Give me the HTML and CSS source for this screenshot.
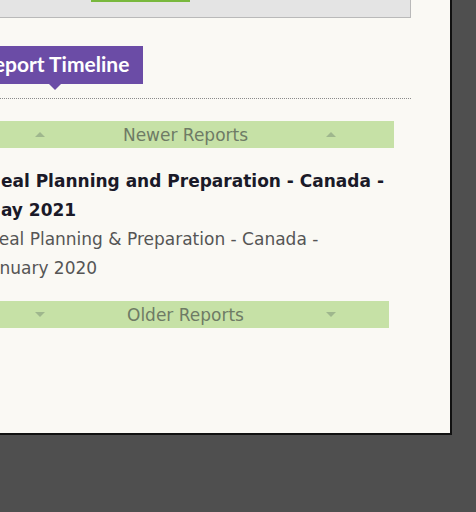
FILE: index.html
```html
<!DOCTYPE html>
<html>
<head>
<meta charset="utf-8">
<link rel="stylesheet" href="styles.css">
</head>
<body>
<div class="panel">
  <div class="content">
    <div class="topbox"><div class="topbtn"></div></div>
    <div class="tabrow">
      <div class="tab">Report Timeline</div>
    </div>
    <div class="rule"></div>
    <div class="bar bar-newer">
      <span class="tri tri-up"></span>
      <span class="bar-label">Newer Reports</span>
      <span class="tri tri-up"></span>
    </div>
    <div class="reports">
      <div class="report current">Meal Planning and Preparation - Canada - May 2021</div>
      <div class="report">Meal Planning &amp; Preparation - Canada - January 2020</div>
    </div>
    <div class="bar bar-older">
      <span class="tri tri-down"></span>
      <span class="bar-label">Older Reports</span>
      <span class="tri tri-down"></span>
    </div>
  </div>
</div>
</body>
</html>
```
FILE: styles.css
```css
html, body {
  margin: 0;
  padding: 0;
}
body {
  background: #4f4f4f;
  width: 476px;
  height: 512px;
  overflow: hidden;
}
.panel {
  width: 450px;
  height: 433px;
  background: #faf9f4;
  border-right: 2px solid #111;
  border-bottom: 2px solid #111;
  overflow: visible;
}
.content {
  margin-left: -20px;
  width: 431px;
}
.topbox {
  height: 17px;
  background: #e4e4e4;
  border-right: 1px solid #b9b9b9;
  border-bottom: 1px solid #b9b9b9;
  width: 430px;
}
.topbtn {
  margin-left: 111px;
  width: 99px;
  height: 2px;
  background: #79b83d;
}
.tabrow {
  margin-top: 28px;
  display: flex;
}
.tab {
  position: relative;
  background: #6b4ca6;
  color: #fff;
  font-family: Lato, "Open Sans", sans-serif;
  font-weight: 700;
  font-size: 21px;
  height: 38px;
  line-height: 36px;
  padding: 0 14px 0 10px;
  margin-left: -9px;
}
.tab::after {
  content: "";
  position: absolute;
  left: 78px;
  top: 38px;
  border-left: 6px solid transparent;
  border-right: 6px solid transparent;
  border-top: 6px solid #6b4ca6;
}
.rule {
  margin-top: 14px;
  border-top: 1px dotted #8a8a8a;
  width: 431px;
}
.bar {
  margin-top: 22px;
  height: 27px;
  background: #c6e1a6;
  display: flex;
  align-items: center;
  justify-content: space-between;
  box-sizing: border-box;
  padding: 0 58px 0 55px;
  width: 414px;
}
.bar-older {
  margin-top: 18px;
  width: 409px;
  padding-right: 53px;
}
.bar-label {
  font-family: "DejaVu Sans", Verdana, sans-serif;
  font-size: 17px;
  color: #6e7b65;
}
.tri {
  width: 0;
  height: 0;
  border-left: 5px solid transparent;
  border-right: 5px solid transparent;
}
.tri-up {
  border-bottom: 5px solid #9fb78d;
}
.tri-down {
  border-top: 5px solid #9fb78d;
}
.reports {
  margin-top: 19px;
  padding-left: 4px;
  width: 402px;
  font-family: "DejaVu Sans", Verdana, sans-serif;
  font-size: 17px;
  line-height: 29px;
}
.report {
  color: #555;
}
.report.current {
  font-weight: 700;
  color: #1a1a28;
}
```
